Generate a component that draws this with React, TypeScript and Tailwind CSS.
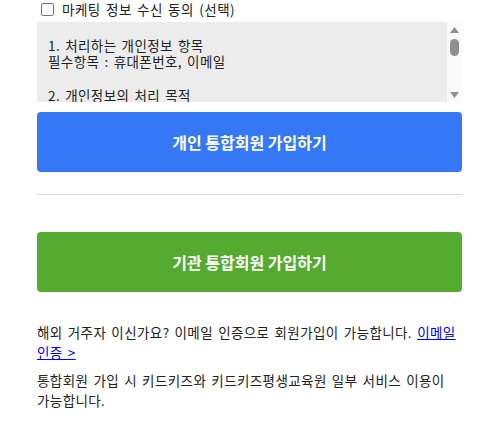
import React from "react";

const font = { fontFamily: '"Noto Sans CJK KR", "Noto Sans", sans-serif' };

export default function App() {
  return (
    <div className="w-[494px] h-[435px] bg-white text-[#222]" style={font}>
      <div className="ml-[37px] w-[425px]">
        <label className="flex h-[18px] items-center text-[13.5px] leading-[18px]">
          <span className="ml-[4px] flex h-[13px] w-[13px] items-center justify-center rounded-[2px] border border-[#767676] bg-white" />
          <span className="ml-[8px] tracking-[0.5px] [word-spacing:1.7px]">마케팅 정보 수신 동의 (선택)</span>
        </label>

        <div className="mt-[4px] flex h-[80px] bg-[#ececec]">
          <div className="flex-1 overflow-hidden pl-[11px] pt-[15px] text-[13.5px] leading-[16px] tracking-[0.4px] [word-spacing:1.7px] text-[#222]">
            <div>1. 처리하는 개인정보 항목</div>
            <div>필수항목 : 휴대폰번호, 이메일</div>
            <div className="h-[18px]" />
            <div>2. 개인정보의 처리 목적</div>
          </div>
          <div className="relative h-full w-[15px] bg-[#fafafa]">
            <svg className="absolute left-[3px] top-[5px]" width="9" height="6" viewBox="0 0 9 6">
              <path d="M4.5 0 L9 6 L0 6 Z" fill="#8f8f8f" />
            </svg>
            <div className="absolute left-[3px] top-[17px] h-[17px] w-[9px] rounded-full bg-[#8f8f8f]" />
            <svg className="absolute bottom-[4px] left-[3px]" width="9" height="6" viewBox="0 0 9 6">
              <path d="M0 0 L9 0 L4.5 6 Z" fill="#8f8f8f" />
            </svg>
          </div>
        </div>

        <button className="mt-[10px] flex h-[60px] w-full items-center justify-center rounded-[4px] bg-[#3478f6] text-[16px] font-bold text-white">
          개인 통합회원 가입하기
        </button>

        <div className="mt-[22px] h-px w-full bg-[#d9d9d9]" />

        <button className="mt-[37px] flex h-[60px] w-full items-center justify-center rounded-[4px] bg-[#55aa30] text-[16px] font-bold text-white">
          기관 통합회원 가입하기
        </button>

        <p className="mt-[30px] break-keep text-[13.5px] leading-[20px] tracking-[0.4px] [word-spacing:1.7px] text-[#222]">
          해외 거주자 이신가요? 이메일 인증으로 회원가입이 가능합니다.{" "}
          <a href="#" className="text-[#0000ee] underline">
            이메일
            <br />
            인증 &gt;
          </a>
        </p>
        <p className="mt-[8px] break-keep text-[13.5px] leading-[20px] tracking-[0.4px] [word-spacing:1.7px] text-[#222]">
          통합회원 가입 시 키드키즈와 키드키즈평생교육원 일부 서비스 이용이 가능합니다.
        </p>
      </div>
    </div>
  );
}
